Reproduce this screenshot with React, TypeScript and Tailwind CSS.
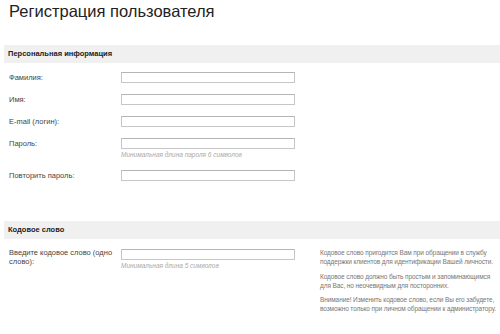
import React from "react";

const Field: React.FC<{ label: string; hint?: string }> = ({ label, hint }) => (
  <div className="flex items-start">
    <div className="w-[112px] shrink-0 text-[7.5px] leading-[11px] text-[#444]">{label}</div>
    <div className="flex flex-col">
      <div className="w-[174px] h-[11px] border border-[#c6c6c6] border-t-[#b5b5b5] bg-white" />
      {hint && (
        <div className="mt-[1px] text-[6.5px] leading-[9px] italic text-[#aaa]">{hint}</div>
      )}
    </div>
  </div>
);

const Band: React.FC<{ title: string }> = ({ title }) => (
  <div className="ml-1 h-[18px] bg-[#f0f0f0] flex items-center pl-1 text-[7.5px] font-bold text-[#222]">
    {title}
  </div>
);

export default function App() {
  return (
    <div className="w-[500px] h-[334px] overflow-hidden bg-white font-['Liberation_Sans',Arial,sans-serif]">
      <h1 className="pl-[9px] pt-[1px] text-[16.5px] leading-[20px] text-[#222]">
        Регистрация пользователя
      </h1>

      <section className="mt-[24px]">
        <Band title="Персональная информация" />
        <div className="pt-[9px] pl-[9px] flex flex-col gap-[11px]">
          <Field label="Фамилия:" />
          <Field label="Имя:" />
          <Field label="E-mail (логин):" />
          <Field label="Пароль:" hint="Минимальная длина пароля 6 символов" />
          <Field label="Повторить пароль:" />
        </div>
      </section>

      <section className="mt-[40px]">
        <Band title="Кодовое слово" />
        <div className="pt-[9px] pl-[9px] flex items-start">
          <div className="w-[112px] shrink-0 pr-[2px] text-[7.5px] leading-[9px] text-[#444]">
            Введите кодовое слово (одно слово):
          </div>
          <div className="flex flex-col pt-[1px]">
            <div className="w-[174px] h-[11px] border border-[#c6c6c6] border-t-[#b5b5b5] bg-white" />
            <div className="mt-[1px] text-[6.5px] leading-[9px] italic text-[#aaa]">
              Минимальная длина 5 символов
            </div>
          </div>
          <div className="ml-[25px] w-[179px] flex flex-col gap-[5px] text-[6.5px] leading-[9.3px] tracking-[-0.1px] text-[#777]">
            <p>Кодовое слово пригодится Вам при обращении в службу поддержки клиентов для идентификации Вашей личности.</p>
            <p>Кодовое слово должно быть простым и запоминающимся для Вас, но неочевидным для посторонних.</p>
            <p>Внимание! Изменить кодовое слово, если Вы его забудете, возможно только при личном обращении к администратору.</p>
          </div>
        </div>
      </section>
    </div>
  );
}
